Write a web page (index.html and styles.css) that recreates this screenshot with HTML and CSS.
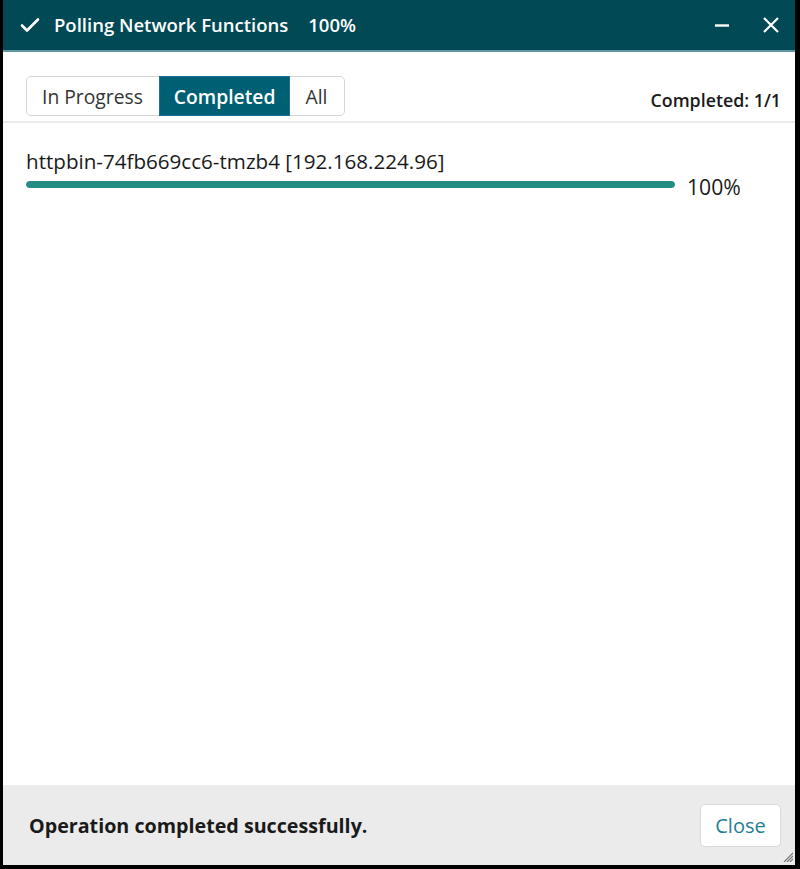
FILE: index.html
```html
<!DOCTYPE html>
<html>
<head>
<meta charset="utf-8">
<link rel="stylesheet" href="styles.css">
</head>
<body>
<div class="window">
  <header class="titlebar">
    <svg class="check" width="20" height="16" viewBox="0 0 20 16"><path d="M2 8.5 L7 13.5 L18 2.5" fill="none" stroke="#fff" stroke-width="2.6" stroke-linecap="round" stroke-linejoin="round"/></svg>
    <span class="title">Polling Network Functions</span>
    <span class="pct">100%</span>
    <span class="spacer"></span>
    <svg class="ctl" width="18" height="18" viewBox="0 0 18 18"><path d="M2 9.5 H16" stroke="#fff" stroke-width="2.4"/></svg>
    <svg class="ctl close" width="18" height="18" viewBox="0 0 18 18"><path d="M2 2 L16 16 M16 2 L2 16" stroke="#fff" stroke-width="2.2"/></svg>
  </header>
  <div class="toolbar">
    <div class="tabs">
      <button class="tab">In Progress</button>
      <button class="tab active">Completed</button>
      <button class="tab">All</button>
    </div>
    <div class="count">Completed: 1/1</div>
  </div>
  <main class="content">
    <div class="item">
      <div class="name">httpbin-74fb669cc6-tmzb4 [192.168.224.96]</div>
      <div class="barrow">
        <div class="bar"><div class="fill" style="width:100%"></div></div>
        <span class="barpct">100%</span>
      </div>
    </div>
  </main>
  <footer class="footer">
    <span class="msg">Operation completed successfully.</span>
    <button class="closebtn">Close</button>
    <svg class="grip" width="10" height="10" viewBox="0 0 10 10"><path d="M10 1 L1 10 M10 4 L4 10 M10 7 L7 10" stroke="#777" stroke-width="1.2"/></svg>
  </footer>
</div>
</body>
</html>
```
FILE: styles.css
```css
* { box-sizing: border-box; }
html, body { margin: 0; padding: 0; }
body {
  background: #000;
  width: 800px;
  height: 869px;
  font-family: "Open Sans", "Liberation Sans", sans-serif;
}
.window {
  margin-left: 3px;
  width: 792px;
  height: 865px;
  background: #fff;
  display: flex;
  flex-direction: column;
  position: relative;
}
.titlebar {
  height: 52px;
  background: #004955;
  border-bottom: 2px solid #5f96a0;
  display: flex;
  align-items: center;
  color: #fff;
  padding: 0 15px 1px 17px;
  font-size: 18.5px;
  font-weight: 600;
}
.check { margin-right: 14px; margin-top: 1px; }
.title { margin-right: 20px; }
.spacer { flex: 1; }
.ctl { display: block; }
.ctl.close { margin-left: 31px; }
.toolbar {
  display: flex;
  align-items: flex-end;
  justify-content: space-between;
  padding: 24px 14px 5px 23px;
  border-bottom: 2px solid #ebebeb;
}
.tabs {
  display: flex;
  border: 1px solid #d6d6d6;
  border-radius: 5px;
  height: 40px;
}
.tab {
  font-family: "Open Sans", "Liberation Sans", sans-serif;
  font-size: 19.3px;
  color: #333;
  background: #fff;
  border: none;
  padding: 0 15px;
  height: 38px;
  border-radius: 5px;
}
.tab:first-child { padding: 0 16px 0 15px; }
.tab.active {
  background: #006073;
  color: #fff;
  font-weight: 600;
  border-radius: 0;
  border: 1px solid #1c6f99;
  height: 40px;
  margin-top: -1px;
  padding: 0 14px;
}
.tab:last-child { padding: 0 17px 0 15px; }
.count {
  font-size: 17.8px;
  font-weight: 600;
  color: #1a1a1a;
  margin-bottom: 4px;
}
.content {
  flex: 1;
  padding: 26px 0 0 23px;
}
.name {
  font-size: 20.6px;
  color: #1a1a1a;
  line-height: 24px;
}
.barrow {
  display: flex;
  align-items: flex-start;
}
.bar {
  width: 649px;
  height: 7px;
  border-radius: 4px;
  background: #e0e0e0;
  overflow: hidden;
  margin-top: 8px;
}
.fill { height: 100%; background: #258d84; border-radius: 4px; }
.barpct {
  font-size: 21.2px;
  line-height: 28px;
  color: #1a1a1a;
  margin-left: 12px;
}
.footer {
  height: 80px;
  background: #ebebeb;
  display: flex;
  align-items: center;
  justify-content: space-between;
  padding: 0 14px 0 26px;
  position: relative;
}
.msg {
  font-size: 19.7px;
  font-weight: 700;
  color: #1a1a1a;
}
.closebtn {
  font-family: "Open Sans", "Liberation Sans", sans-serif;
  font-size: 20px;
  color: #237f8f;
  background: #fff;
  border: 1px solid #dadada;
  border-radius: 5px;
  width: 81px;
  height: 43px;
}
.grip { position: absolute; right: 2px; bottom: 3px; }
```
